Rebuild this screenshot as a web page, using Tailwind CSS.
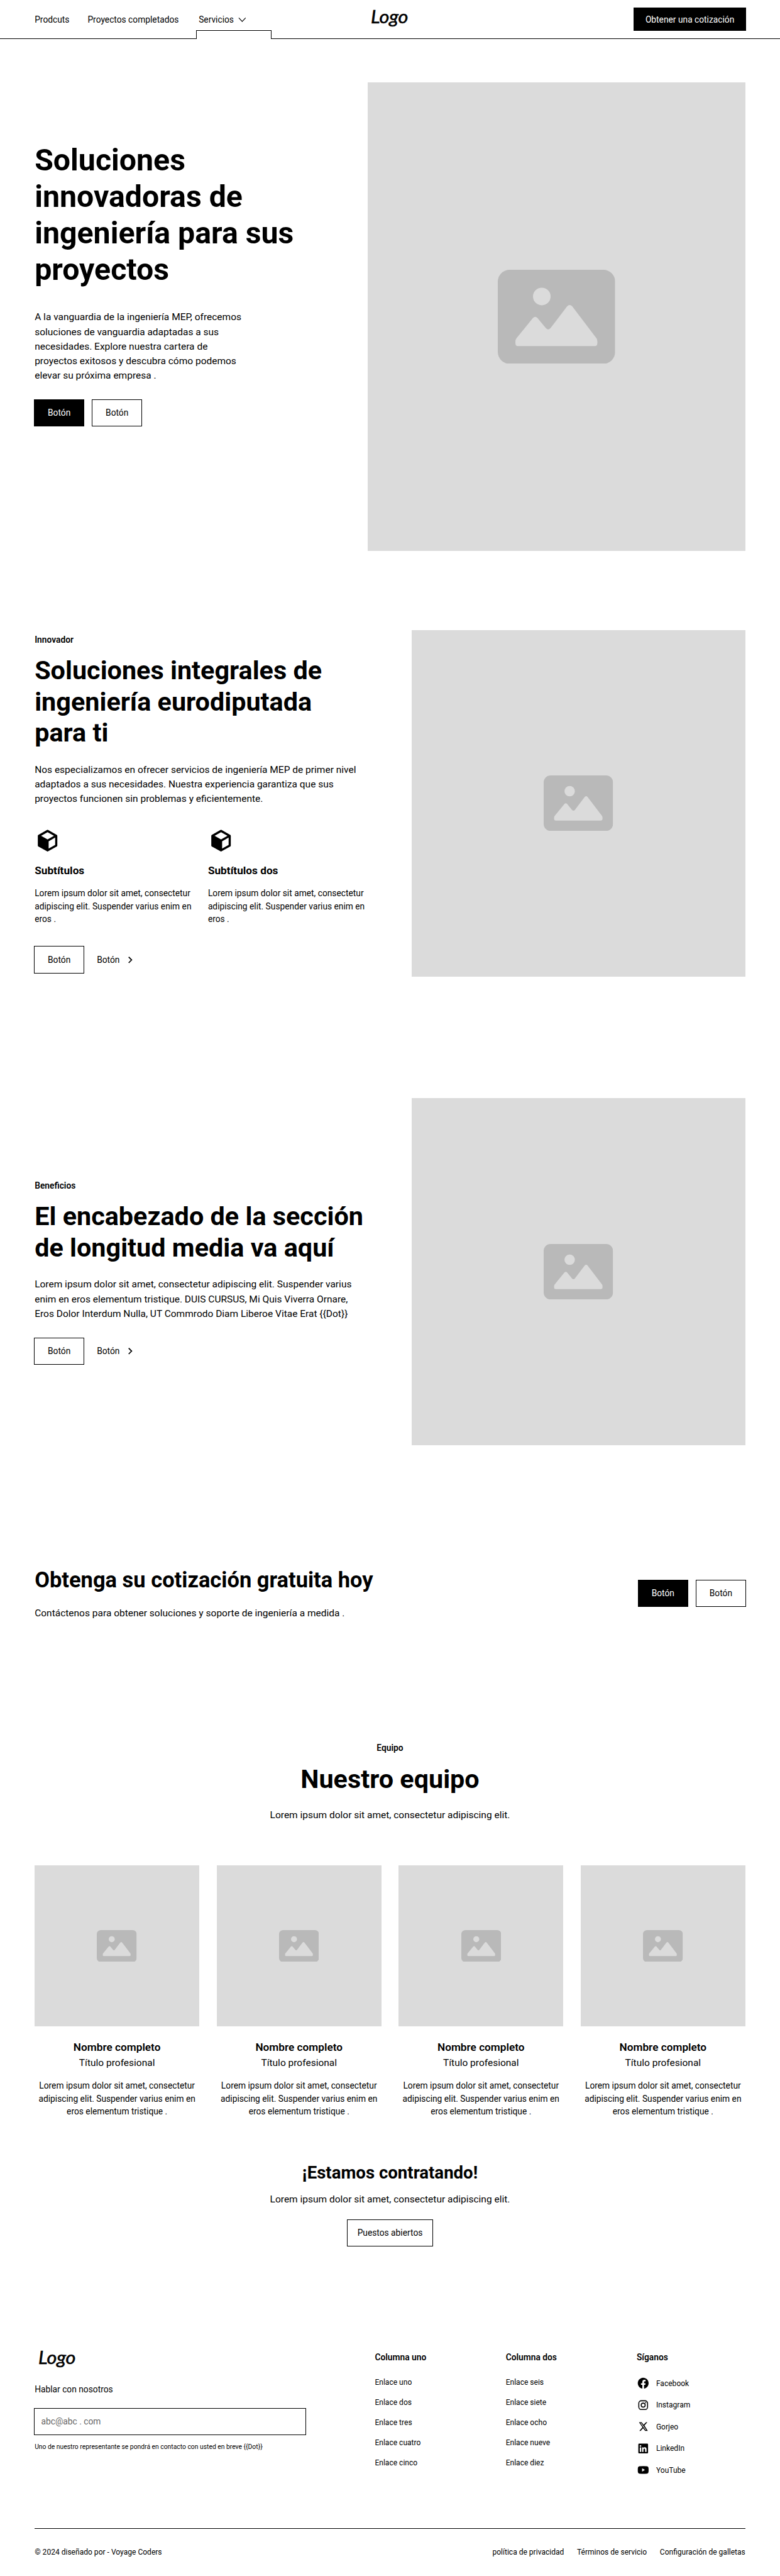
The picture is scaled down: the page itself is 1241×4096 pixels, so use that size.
<!DOCTYPE html>
<html lang="es" class="text-[13.791px]">
<head>
<meta charset="utf-8">
<title>Logo</title>
<script src="https://cdn.jsdelivr.net/npm/@tailwindcss/browser@4"></script>
</head>
<body class="bg-white text-black font-['Roboto',sans-serif] text-[1rem] leading-[1.5rem] h-[4096px] overflow-hidden">

<svg class="hidden">
  <symbol id="picture" viewBox="0 0 20 16">
    <path fill="#b9b9b9" d="M2 0h16a2 2 0 0 1 2 2v12a2 2 0 0 1-2 2H2a2 2 0 0 1-2-2V2a2 2 0 0 1 2-2z"/>
    <circle cx="7.5" cy="4.55" r="1.5" fill="#dbdbdb"/>
    <path fill="#dbdbdb" d="M3 12.3Q3 11.9 3.15 11.7L6 8.2Q6.37 7.8 6.75 8.2L8.2 9.95Q8.58 10.35 8.98 9.95L11.8 6.25Q12.25 5.75 12.7 6.25L16.85 11.7Q16.97 11.9 16.97 12.2V12.5Q16.97 13 16.45 13H3.5Q3 13 3 12.5Z"/>
  </symbol>
  <symbol id="cube" viewBox="0 0 24 24">
    <path fill-rule="evenodd" d="M21 16.5c0 .38-.21.71-.53.88l-7.9 4.44c-.16.12-.36.18-.57.18s-.41-.06-.57-.18l-7.9-4.44A1 1 0 0 1 3 16.5v-9c0-.38.21-.71.53-.88l7.9-4.44c.16-.12.36-.18.57-.18s.41.06.57.18l7.9 4.44c.32.17.53.5.53.88zM12 4.15 6.04 7.5 12 10.85l5.96-3.35zM13 12.58v6.71l6-3.38V9.21z"/>
  </symbol>
  <symbol id="chevron" viewBox="0 0 24 24">
    <path fill="none" stroke="#000" stroke-width="2" d="M9 6.6 14.4 12 9 17.4"/>
  </symbol>
  <symbol id="logo" viewBox="0 0 84 36">
    <text x="7" y="26" font-family="Lato, sans-serif" font-style="italic" font-weight="400" font-size="34" stroke="#000" stroke-width="0.7" textLength="69" lengthAdjust="spacingAndGlyphs">Logo</text>
  </symbol>
</svg>

<header class="h-[4.5rem] border-b border-black px-16 grid grid-cols-[1fr_5.25rem_1fr] items-center relative">
  <nav class="flex items-center pt-px">
    <a>Prodcuts</a>
    <a class="ml-[2.1rem]">Proyectos completados</a>
    <a class="ml-[2.3rem] flex items-center gap-1">Servicios
      <svg class="size-6" viewBox="0 0 24 24"><path fill="none" stroke="#000" stroke-width="1.3" d="M5.7 8.5 12 15.3 18.3 8.5"/></svg>
    </a>
  </nav>
  <svg class="w-[5.25rem] h-9 overflow-visible"><use href="#logo"/></svg>
  <a class="justify-self-end -mr-px h-[2.625rem] w-[12.94rem] bg-black text-white flex items-center justify-center pt-px">Obtener una cotización</a>
  <div class="absolute left-[22.625rem] top-14 w-[8.7rem] h-4 bg-white border border-b-0 border-black"></div>
</header>

<section class="px-16 pt-20 flex justify-between items-start h-[68.125rem]">
  <div class="pt-[6.9rem]">
    <h1 class="text-[3.5rem] leading-[4.2rem] font-bold">Soluciones<br>innovadoras de<br>ingeniería para sus<br>proyectos</h1>
    <p class="mt-[2.57rem] text-[1.125rem] leading-[1.6875rem]">A la vanguardia de la ingeniería MEP, ofrecemos<br>soluciones de vanguardia adaptadas a sus<br>necesidades. Explore nuestra cartera de<br>proyectos exitosos y descubra cómo podemos<br>elevar su próxima empresa .</p>
    <div class="mt-[1.83rem] -ml-px flex gap-[0.875rem]">
      <a class="w-[5.8rem] h-[3.15rem] bg-black text-white border border-black flex items-center justify-center">Botón</a>
      <a class="w-[5.8rem] h-[3.15rem] border border-black flex items-center justify-center">Botón</a>
    </div>
  </div>
  <div class="w-[43.6rem] h-[54rem] bg-[#dbdbdb] flex items-center justify-center">
    <svg class="w-[13.54rem] h-[10.83rem]"><use href="#picture"/></svg>
  </div>
</section>

<section class="px-16 pb-28 flex gap-20 items-center">
  <div class="flex-1">
    <p class="font-semibold">Innovador</p>
    <h2 class="mt-[1.06rem] text-[3rem] leading-[3.6rem] font-bold">Soluciones integrales de<br>ingeniería eurodiputada<br>para ti</h2>
    <p class="mt-[1.56rem] text-[1.125rem] leading-[1.6875rem]">Nos especializamos en ofrecer servicios de ingeniería MEP de primer nivel<br>adaptados a sus necesidades. Nuestra experiencia garantiza que sus<br>proyectos funcionen sin problemas y eficientemente.</p>
    <div class="mt-[2.45rem] grid grid-cols-2 gap-6">
      <div>
        <svg class="size-12"><use href="#cube"/></svg>
        <h3 class="mt-[1.05rem] text-[1.25rem] leading-[1.75rem] font-bold">Subtítulos</h3>
        <p class="mt-4">Lorem ipsum dolor sit amet, consectetur<br>adipiscing elit. Suspender varius enim en<br>eros .</p>
      </div>
      <div>
        <svg class="size-12"><use href="#cube"/></svg>
        <h3 class="mt-[1.05rem] text-[1.25rem] leading-[1.75rem] font-bold">Subtítulos dos</h3>
        <p class="mt-4">Lorem ipsum dolor sit amet, consectetur<br>adipiscing elit. Suspender varius enim en<br>eros .</p>
      </div>
    </div>
    <div class="mt-[2.35rem] -ml-px flex items-center gap-[1.45rem]">
      <a class="w-[5.8rem] h-[3.15rem] border border-black flex items-center justify-center">Botón</a>
      <a class="flex items-center gap-2">Botón <svg class="size-6"><use href="#chevron"/></svg></a>
    </div>
  </div>
  <div class="w-[38.5rem] h-[40rem] bg-[#dbdbdb] flex items-center justify-center">
    <svg class="w-[8rem] h-[6.4rem]"><use href="#picture"/></svg>
  </div>
</section>

<section class="px-16 py-28 flex gap-20 items-center">
  <div class="flex-1 pt-px">
    <p class="font-semibold">Beneficios</p>
    <h2 class="mt-[1.06rem] text-[3rem] leading-[3.6rem] font-bold whitespace-nowrap">El encabezado de la sección<br>de longitud media va aquí</h2>
    <p class="mt-[1.58rem] text-[1.125rem] leading-[1.6875rem]">Lorem ipsum dolor sit amet, consectetur adipiscing elit. Suspender varius<br>enim en eros elementum tristique. DUIS CURSUS, Mi Quis Viverra Ornare,<br>Eros Dolor Interdum Nulla, UT Commrodo Diam Liberoe Vitae Erat {{Dot}}</p>
    <div class="mt-[1.83rem] -ml-px flex items-center gap-[1.45rem]">
      <a class="w-[5.8rem] h-[3.15rem] border border-black flex items-center justify-center">Botón</a>
      <a class="flex items-center gap-2">Botón <svg class="size-6"><use href="#chevron"/></svg></a>
    </div>
  </div>
  <div class="w-[38.5rem] h-[40rem] bg-[#dbdbdb] flex items-center justify-center">
    <svg class="w-[8rem] h-[6.4rem]"><use href="#picture"/></svg>
  </div>
</section>

<section class="px-16 py-28 flex justify-between items-center">
  <div>
    <h2 class="pt-px text-[2.5rem] leading-[3rem] font-bold">Obtenga su cotización gratuita hoy</h2>
    <p class="mt-6 -mb-px text-[1.125rem] leading-[1.6875rem]">Contáctenos para obtener soluciones y soporte de ingeniería a medida .</p>
  </div>
  <div class="-mr-px flex gap-[0.875rem]">
    <a class="w-[5.8rem] h-[3.15rem] bg-black text-white border border-black flex items-center justify-center">Botón</a>
    <a class="w-[5.8rem] h-[3.15rem] border border-black flex items-center justify-center">Botón</a>
  </div>
</section>

<section class="px-16 py-28 text-center">
  <p class="font-semibold">Equipo</p>
  <h2 class="mt-[1.06rem] text-[3rem] leading-[3.6rem] font-bold">Nuestro equipo</h2>
  <p class="mt-[1.52rem] text-[1.125rem] leading-[1.6875rem]">Lorem ipsum dolor sit amet, consectetur adipiscing elit.</p>
  <div class="mt-[4.93rem] grid grid-cols-4 gap-8">
    <article>
      <div class="h-[18.5rem] bg-[#dbdbdb] flex items-center justify-center"><svg class="w-[4.6rem] h-[3.68rem]"><use href="#picture"/></svg></div>
      <h3 class="mt-[1.55rem] text-[1.25rem] leading-[1.875rem] font-semibold">Nombre completo</h3>
      <p class="text-[1.125rem] leading-[1.6875rem]">Título profesional</p>
      <p class="mt-4 -mb-px">Lorem ipsum dolor sit amet, consectetur<br>adipiscing elit. Suspender varius enim en<br>eros elementum tristique .</p>
    </article>
    <article>
      <div class="h-[18.5rem] bg-[#dbdbdb] flex items-center justify-center"><svg class="w-[4.6rem] h-[3.68rem]"><use href="#picture"/></svg></div>
      <h3 class="mt-[1.55rem] text-[1.25rem] leading-[1.875rem] font-semibold">Nombre completo</h3>
      <p class="text-[1.125rem] leading-[1.6875rem]">Título profesional</p>
      <p class="mt-4 -mb-px">Lorem ipsum dolor sit amet, consectetur<br>adipiscing elit. Suspender varius enim en<br>eros elementum tristique .</p>
    </article>
    <article>
      <div class="h-[18.5rem] bg-[#dbdbdb] flex items-center justify-center"><svg class="w-[4.6rem] h-[3.68rem]"><use href="#picture"/></svg></div>
      <h3 class="mt-[1.55rem] text-[1.25rem] leading-[1.875rem] font-semibold">Nombre completo</h3>
      <p class="text-[1.125rem] leading-[1.6875rem]">Título profesional</p>
      <p class="mt-4 -mb-px">Lorem ipsum dolor sit amet, consectetur<br>adipiscing elit. Suspender varius enim en<br>eros elementum tristique .</p>
    </article>
    <article>
      <div class="h-[18.5rem] bg-[#dbdbdb] flex items-center justify-center"><svg class="w-[4.6rem] h-[3.68rem]"><use href="#picture"/></svg></div>
      <h3 class="mt-[1.55rem] text-[1.25rem] leading-[1.875rem] font-semibold">Nombre completo</h3>
      <p class="text-[1.125rem] leading-[1.6875rem]">Título profesional</p>
      <p class="mt-4 -mb-px">Lorem ipsum dolor sit amet, consectetur<br>adipiscing elit. Suspender varius enim en<br>eros elementum tristique .</p>
    </article>
  </div>
  <h2 class="mt-[5.05rem] text-[2rem] leading-[2.6rem] font-bold">¡Estamos contratando!</h2>
  <p class="mt-4 text-[1.125rem] leading-[1.6875rem]">Lorem ipsum dolor sit amet, consectetur adipiscing elit.</p>
  <a class="mt-[1.4rem] mx-auto w-[9.875rem] h-[3.125rem] border border-black flex items-center justify-center">Puestos abiertos</a>
</section>

<footer class="px-16 pt-[4.98rem]">
  <div class="flex h-[20.57rem] border-b border-black">
    <div class="w-[39.25rem]">
      <svg class="w-[5.25rem] h-9 overflow-visible"><use href="#logo"/></svg>
      <p class="mt-[1.55rem]">Hablar con nosotros</p>
      <div class="mt-[1.4rem] -ml-px w-[31.4rem] h-[3.1rem] border border-black px-3 flex items-center text-[#666]">abc@abc . com</div>
      <p class="mt-3 text-[0.75rem] leading-[1.125rem]">Uno de nuestro representante se pondrá en contacto con usted en breve {{Dot}}</p>
    </div>
    <div class="w-[15.1rem] pt-px">
      <h4 class="font-semibold">Columna uno</h4>
      <ul class="mt-4 text-[0.875rem] leading-[1.3125rem]">
        <li class="py-2">Enlace uno</li>
        <li class="py-2">Enlace dos</li>
        <li class="py-2">Enlace tres</li>
        <li class="py-2">Enlace cuatro</li>
        <li class="py-2">Enlace cinco</li>
      </ul>
    </div>
    <div class="w-[15.1rem] pt-px">
      <h4 class="font-semibold">Columna dos</h4>
      <ul class="mt-4 text-[0.875rem] leading-[1.3125rem]">
        <li class="py-2">Enlace seis</li>
        <li class="py-2">Enlace siete</li>
        <li class="py-2">Enlace ocho</li>
        <li class="py-2">Enlace nueve</li>
        <li class="py-2">Enlace diez</li>
      </ul>
    </div>
    <div class="pt-px">
      <h4 class="font-semibold">Síganos</h4>
      <ul class="mt-4 text-[0.875rem] leading-[1.3125rem]">
        <li class="py-2 flex items-center gap-3">
          <svg class="size-6" viewBox="0 0 24 24"><path d="M22 12.06C22 6.5 17.52 2 12 2S2 6.5 2 12.06c0 5.02 3.66 9.18 8.44 9.94v-7.03H7.9v-2.91h2.54V9.85c0-2.52 1.49-3.91 3.78-3.91 1.09 0 2.24.2 2.24.2v2.47h-1.26c-1.24 0-1.63.78-1.63 1.57v1.88h2.78l-.45 2.91h-2.33V22C18.35 21.24 22 17.08 22 12.06z"/></svg>Facebook</li>
        <li class="py-2 flex items-center gap-3">
          <svg class="size-6" viewBox="0 0 24 24" fill="none" stroke="#000" stroke-width="1.8"><rect x="3.9" y="3.9" width="16.2" height="16.2" rx="4.6"/><circle cx="12" cy="12" r="3.7"/><circle cx="16.8" cy="7.2" r="1.08" fill="#000" stroke="none"/></svg>Instagram</li>
        <li class="py-2 flex items-center gap-3">
          <svg class="size-6" viewBox="0 0 24 24"><path d="M17.18 4h2.46l-5.36 6.12L20.58 20h-4.94l-3.86-5.05L7.36 20H4.9l5.73-6.55L4.2 4h5.06l3.49 4.61zm-.86 14.38h1.36L8.35 5.4H6.89z"/></svg>Gorjeo</li>
        <li class="py-2 flex items-center gap-3">
          <svg class="size-6" viewBox="0 0 24 24"><path fill-rule="evenodd" d="M4.5 3h15A1.5 1.5 0 0 1 21 4.5v15a1.5 1.5 0 0 1-1.5 1.5h-15A1.5 1.5 0 0 1 3 19.5v-15A1.5 1.5 0 0 1 4.5 3zM5.7 9.9v8.4h2.6V9.9zM7 5.7a1.55 1.55 0 1 0 0 3.1a1.55 1.55 0 0 0 0-3.1zM9.9 9.9v8.4h2.6v-4.3c0-1.15.5-1.9 1.55-1.9s1.45.8 1.45 1.9v4.3h2.7v-4.8c0-2.5-1.1-3.8-3.15-3.8c-1.25 0-2.1.6-2.55 1.3V9.9z"/></svg>LinkedIn</li>
        <li class="py-2 flex items-center gap-3">
          <svg class="size-6" viewBox="0 0 24 24"><path fill-rule="evenodd" d="M5 5.2Q12 4.700 19 5.2Q21.5 5.4 21.8 8Q22.2 12 21.8 16Q21.5 18.6 19 18.8Q12 19.3 5 18.8Q2.5 18.6 2.2 16Q1.8 12 2.2 8Q2.5 5.4 5 5.2zM10 9v6l5.2-3z"/></svg>YouTube</li>
      </ul>
    </div>
  </div>
  <div class="mt-[2.05rem] flex justify-between text-[0.875rem] leading-[1.3125rem]">
    <p>© 2024 diseñado por - Voyage Coders</p>
    <div class="flex gap-6">
      <a>política de privacidad</a>
      <a>Términos de servicio</a>
      <a>Configuración de galletas</a>
    </div>
  </div>
</footer>

</body>
</html>
